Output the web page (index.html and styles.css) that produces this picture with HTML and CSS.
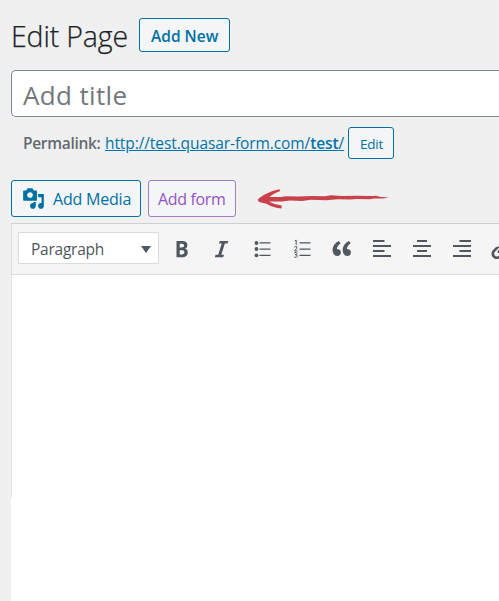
FILE: index.html
```html
<!DOCTYPE html>
<html lang="en">
<head>
<meta charset="utf-8">
<title>Edit Page</title>
<link rel="stylesheet" href="styles.css">
</head>
<body>
<main class="page">
  <header class="heading">
    <h1 class="heading-title">Edit Page</h1>
    <a class="button add-new"><span>Add New</span></a>
  </header>
  <div class="title-field"><span>Add title</span></div>
  <div class="permalink">
    <strong class="permalink-label">Permalink:</strong>
    <a class="permalink-url">http://test.quasar-form.com/<b>test</b>/</a>
    <a class="button edit"><span>Edit</span></a>
  </div>
  <div class="media-row">
    <a class="button add-media">
      <svg width="23" height="23" viewBox="0 0 20 20" fill="currentColor"><path d="M13 11V4c0-.55-.45-1-1-1h-1.67L9 1H5L3.67 3H2c-.55 0-1 .45-1 1v7c0 .55.45 1 1 1h10c.55 0 1-.45 1-1zM7 4.5c1.38 0 2.5 1.12 2.5 2.5S8.38 9.5 7 9.5 4.5 8.38 4.5 7 5.62 4.5 7 4.5zM14 6h5v10.5c0 1.38-1.12 2.5-2.5 2.5S14 17.88 14 16.5s1.12-2.5 2.5-2.5c.17 0 .34.02.5.05V9h-3V6zm-4 8.05V13h2v3.5c0 1.38-1.12 2.5-2.5 2.5S7 17.88 7 16.5 8.12 14 9.5 14c.17 0 .34.02.5.05z"/></svg>
      <span>Add Media</span>
    </a>
    <a class="button add-form"><span>Add form</span></a>
    <svg class="arrow" width="134" height="22" viewBox="256 188 134 22" fill="#c9414a">
      <path d="M258 199.2C263 195 271 190.800 279.500 189.300L280.300 190.900C276 192.500 272 194.500 269.500 196.900L281 197L286 196.200L298 196.600L312 196L325 196.300L331 195.300L342 196L357 195.700L373 196L376 195.800L381 196.900L389 197.500L383 198.500L374 198.400L370 199.200L357 198.900L350 199.600L338 199.300L326 200.200L311 199.800L302 201L290 200.600L282 201.500L269 201.500C272 203.500 277 204.500 281.800 205.600L281.500 208.500C276 208.200 271 206.200 267 203.900C263.500 202.800 259.500 202.400 258.200 201.200Z"/>
    </svg>
  </div>
  <section class="editor">
    <div class="toolbar">
      <div class="format"><span>Paragraph</span><svg width="10" height="7" viewBox="0 0 10 7" fill="#50575e"><path d="M0 0H10L5 7Z"/></svg></div>
      <div class="tools">
        <svg viewBox="0 0 20 20"><path d="M6 4v13h4.540c1.370 0 2.460-.33 3.260-1 .8-.66 1.200-1.580 1.200-2.770 0-.84-.17-1.510-.51-2.010s-.9-.85-1.670-1.030v-.09c.57-.1 1.020-.4 1.360-.9s.51-1.130.51-1.910c0-1.140-.39-1.980-1.170-2.500C12.750 4.260 11.500 4 9.780 4H6zm2.570 5.150V6.260h1.360c.73 0 1.270.11 1.610.32.34.22.51.58.51 1.070 0 .54-.16.92-.47 1.150s-.82.35-1.510.35h-1.500zm0 2.190h1.600c1.440 0 2.160.53 2.160 1.610 0 .6-.17 1.050-.51 1.340s-.86.43-1.570.43H8.570v-3.380z"/></svg>
        <svg viewBox="0 0 20 20"><path d="M14.780 6h-2.130l-2.800 9h2.120l-.62 2H4.600l.62-2h2.140l2.800-9H8.030l.62-2h6.750z"/></svg>
        <svg viewBox="0 0 25 25"><circle cx="7.500" cy="7" r="1.900"/><circle cx="7.500" cy="13" r="1.900"/><circle cx="7.500" cy="19.300" r="1.900"/><path d="M10.500 6.200H21.500V7.600H10.500ZM10.500 12.400H21.500V13.800H10.500ZM10.500 18.700H21.500V20.100H10.500Z"/></svg>
        <svg viewBox="0 0 25 25"><path d="M10.500 6.200H21.500V7.600H10.500ZM10.500 12.400H21.500V13.800H10.500ZM10.500 18.700H21.500V20.100H10.500Z"/><path class="numerals" d="M5.800 4.900L7.200 4.100V9M5.300 11.200Q6.700 9.900 7.900 10.900Q8.600 12.200 5.500 14.900H8.500M5.400 16.700Q8 15.700 8.100 17.400Q8 18.700 6.300 18.700Q8.600 18.700 8.400 20.300Q8 22 5.300 21.100"/></svg>
        <svg viewBox="0 0 20 20"><path d="M9.490 13.220c0-.74-.2-1.380-.61-1.900-.62-.78-1.830-.88-2.530-.72-.29-1.650 1.110-3.750 2.920-4.650L7.880 4c-2.730 1.300-5.420 4.280-4.960 8.050C3.210 14.430 4.590 16 6.540 16c.85 0 1.560-.25 2.120-.75s.83-1.180.83-2.030zm8.050 0c0-.74-.2-1.380-.61-1.900-.63-.78-1.830-.88-2.530-.72-.29-1.650 1.110-3.750 2.920-4.650L15.930 4c-2.730 1.300-5.410 4.280-4.950 8.050.28 2.380 1.660 3.950 3.610 3.950.85 0 1.560-.25 2.120-.75s.83-1.180.83-2.030z"/></svg>
        <svg viewBox="0 0 25 25"><path d="M4 4H15.500V6H4ZM4 9H22V11H4ZM4 14H15.500V16H4ZM4 19H22V21H4Z"/></svg>
        <svg viewBox="0 0 25 25"><path d="M8 4H18V6H8ZM4 9H22V11H4ZM8 14H18V16H8ZM4 19H22V21H4Z"/></svg>
        <svg viewBox="0 0 25 25"><path d="M10.500 4H22V6H10.500ZM4 9H22V11H4ZM10.500 14H22V16H10.500ZM4 19H22V21H4Z"/></svg>
        <svg viewBox="0 0 20 20"><path d="M17.740 2.760c1.680 1.690 1.680 4.410 0 6.100l-1.530 1.520c-1.120 1.120-2.700 1.470-4.140 1.090l2.620-2.610.76-.77.76-.76c.84-.84.84-2.200 0-3.040-.84-.85-2.200-.85-3.040 0l-.77.76-3.380 3.380c-.37-1.440-.02-3.020 1.100-4.140l1.520-1.530c1.690-1.680 4.420-1.680 6.100 0zM8.590 13.430l5.340-5.340c.42-.42.42-1.100 0-1.520-.44-.43-1.130-.39-1.530 0l-5.330 5.340c-.42.42-.42 1.100 0 1.520.44.43 1.130.39 1.520 0zm-.76 2.290l4.140-4.150c.38 1.440.03 3.020-1.090 4.140l-1.520 1.530c-1.690 1.680-4.410 1.680-6.100 0-1.680-1.680-1.680-4.420 0-6.100l1.530-1.520c1.120-1.120 2.700-1.470 4.140-1.100l-4.140 4.150c-.85.84-.85 2.200 0 3.050.84.840 2.200.840 3.040 0z"/></svg>
      </div>
    </div>
    <div class="canvas"></div>
  </section>
</main>
</body>
</html>
```
FILE: styles.css
```css
* { box-sizing: border-box; }

body {
  margin: 0;
  height: 601px;
  overflow: hidden;
  background: #f0f0f0;
  color: #1d2327;
  font: 16px/24px "Open Sans", "Noto Sans", sans-serif;
}

.page {
  display: flex;
  flex-direction: column;
  height: 601px;
  padding: 18px 0 0 11px;
}

.heading { display: flex; height: 34px; }

.heading-title {
  width: 128px;
  margin: 0;
  font-size: 28.5px;
  font-weight: 300;
  line-height: 36px;
  letter-spacing: -0.15px;
  white-space: nowrap;
  -webkit-text-stroke: 0.25px currentColor;
}

.button {
  display: flex;
  align-items: center;
  flex: none;
  border: 1px solid #0071a1;
  border-radius: 3px;
  background: #f3f5f6;
  color: #0071a1;
  white-space: nowrap;
}

.add-new {
  width: 91px;
  padding: 2px 0 0 11px;
  font-size: 15.5px;
  font-weight: 600;
}

.title-field {
  flex: none;
  height: 47px;
  margin-top: 18px;
  padding: 2px 0 0 11px;
  border: 1px solid #7e8993;
  border-right: 0;
  border-radius: 5px 0 0 5px;
  background: #fff;
  color: #72777c;
  font-size: 26px;
  line-height: 44px;
  letter-spacing: 0.35px;
}

.permalink {
  display: flex;
  align-items: center;
  height: 32px;
  margin-top: 10px;
  padding-left: 12px;
}

.permalink-label {
  width: 82px;
  color: #646970;
  font-size: 15.5px;
  font-weight: 600;
  letter-spacing: -0.3px;
}

.permalink-url {
  width: 243px;
  color: #0073aa;
  font-size: 15.5px;
  letter-spacing: -0.09px;
  text-decoration: underline;
  white-space: nowrap;
}

.permalink-url b { font-weight: 600; }

.edit {
  width: 46px;
  height: 32px;
  padding: 2px 0 0 11px;
  font-size: 13.5px;
  letter-spacing: -0.2px;
}

.media-row {
  display: flex;
  height: 37px;
  margin-top: 21px;
}

.add-media { width: 130px; padding-left: 10px; }
.add-media span { margin: 1px 0 0 8px; letter-spacing: -0.2px; }

.add-form {
  width: 88px;
  margin-left: 7px;
  padding: 1px 0 0 9px;
  border-color: #a07cc5;
  color: #9254c4;
  letter-spacing: -0.35px;
}

.arrow { margin: 8px 0 0 20px; }

.editor {
  display: flex;
  flex-direction: column;
  flex: 1;
  margin-top: 6px;
}

.toolbar {
  display: flex;
  flex: none;
  height: 52px;
  padding: 8px 0 0 6px;
  border: 1px solid #dcdcde;
  border-top-color: #ccd0d4;
  border-right: 0;
  background: #f5f5f5;
  overflow: hidden;
}

.format {
  display: flex;
  align-items: center;
  justify-content: space-between;
  flex: none;
  width: 141px;
  height: 32px;
  padding: 0 7px 0 12px;
  border: 1px solid #dcdcde;
  background: #fff;
  color: #50575e;
  font-size: 15.5px;
  letter-spacing: -0.25px;
}

.format span { margin-top: 1px; }
.format svg { margin-top: 2px; }

.tools {
  display: flex;
  flex: 1;
  min-width: 0;
  gap: 15px;
  margin: 4px 0 0 10px;
  overflow: hidden;
}

.tools svg {
  flex: none;
  width: 25px;
  height: 25px;
  fill: #50575e;
}

.tools .numerals { fill: none; stroke: #50575e; stroke-width: 1; }

.canvas {
  flex: 1;
  background: linear-gradient(#e5e5e5, #e5e5e5) 0 0 / 1px 223px no-repeat #fff;
}
```
